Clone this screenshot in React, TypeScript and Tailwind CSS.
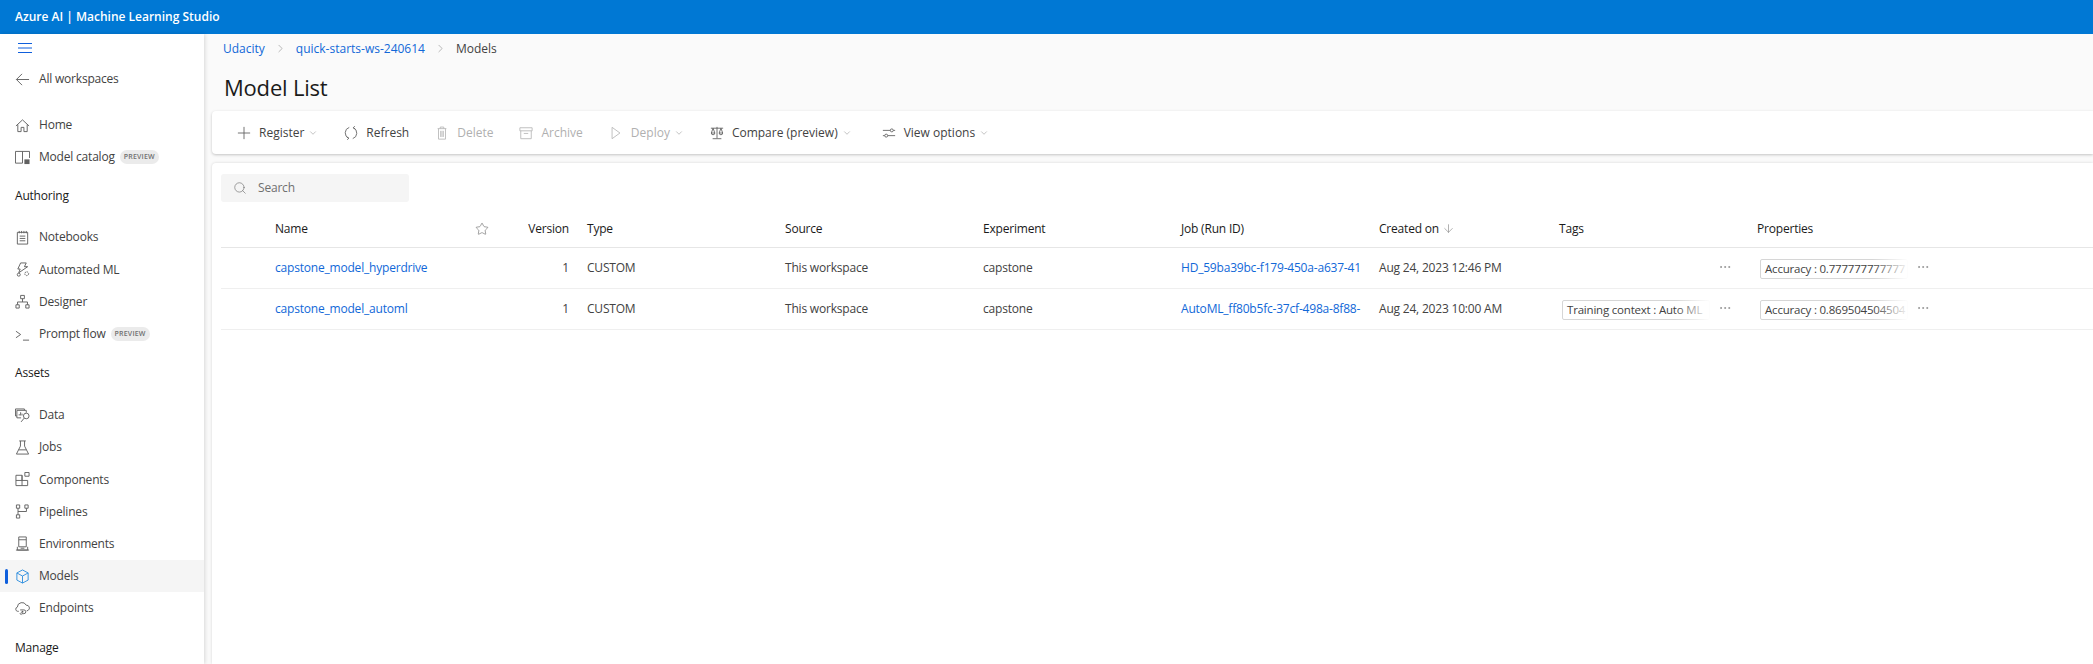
import React from 'react';
import { ArrowDown, ChevronDown, ChevronRight, Ellipsis, Search, Star } from 'lucide-react';

type IconProps = { className?: string };

const Svg = ({ className, children }: IconProps & { children: React.ReactNode }) => (
  <svg viewBox="0 0 16 16" fill="none" stroke="currentColor" strokeWidth="1" className={className}>
    {children}
  </svg>
);

const HomeIcon = ({ className }: IconProps) => (
  <Svg className={className}>
    <path d="M1 8.5L8 2l7 6.5M3 7v7.5h3.5v-4.5h3v4.5H13V7" />
  </Svg>
);
const CatalogIcon = ({ className }: IconProps) => (
  <Svg className={className}>
    <path d="M8 14H.5V1.5h15v7M8 1.5V14" />
    <rect x="10" y="10" width="5.5" height="5" fill="currentColor" stroke="none" />
  </Svg>
);
const NotebookIcon = ({ className }: IconProps) => (
  <Svg className={className}>
    <path d="M2.5 2.5h11v12.5h-11zM4.5 1v2.5M7 1v2.5M9.5 1v2.5M12 1v2.5M5 6.5h6M5 9h6M5 11.5h6" />
  </Svg>
);
const AutomlIcon = ({ className }: IconProps) => (
  <Svg className={className}>
    <path d="M6 1h6l-2 4h3.5L4 11.5l1.5-4H3z" />
    <circle cx="4" cy="13.5" r="1.6" />
    <circle cx="12.5" cy="12.5" r="2" strokeDasharray="1.5 .6" />
  </Svg>
);
const DesignerIcon = ({ className }: IconProps) => (
  <Svg className={className}>
    <path d="M6 1.5h4v3.5H6zM1 11.5h3.5V15H1zM11.5 11.5H15V15h-3.5zM8 5v3.5M2.7 11.5v-3h10.6v3" />
  </Svg>
);
const PromptIcon = ({ className }: IconProps) => (
  <Svg className={className}>
    <path d="M1 4.5l5 3.5-5 3.5M8.5 14h6.5" />
  </Svg>
);
const DataIcon = ({ className }: IconProps) => (
  <Svg className={className}>
    <path d="M.5 1h9.5v1.5M.5 1v7.5H2M2 2.5h10V5M2 2.5v8h4.5M4.5 8V6.5M6 8V4.5M7.5 8V6" />
    <circle cx="12" cy="8.5" r="3" />
    <path d="M9.8 10.8l-3.3 4" />
  </Svg>
);
const JobsIcon = ({ className }: IconProps) => (
  <Svg className={className}>
    <path d="M4.5 1h7M5.8 1v5.5L1.5 15h13l-4.3-8.5V1M4 10.5h8" />
  </Svg>
);
const ComponentsIcon = ({ className }: IconProps) => (
  <Svg className={className}>
    <path d="M1 3.5h6.5v11H1zM1 9h12.5v5.5h-6M7.5 3.5V9M10.5 .5h4.5v4h-4.5z" />
  </Svg>
);
const PipelinesIcon = ({ className }: IconProps) => (
  <Svg className={className}>
    <path d="M1.5 1h3.5v3.5H1.5zM10.5 1H14v3.5h-3.5zM1.5 11.5h3.5V15H1.5zM3.2 4.5v7M3.2 8h9V4.5" />
  </Svg>
);
const EnvironmentsIcon = ({ className }: IconProps) => (
  <Svg className={className}>
    <path d="M4 1h8v10.5H4zM4 4h8M2.5 11.5V15h11v-3.5M1 15h14M6 13h4" />
  </Svg>
);
const ModelsIcon = ({ className }: IconProps) => (
  <Svg className={className}>
    <path d="M8 1l6 3.2v7.6L8 15l-6-3.2V4.2zM2 4.2L8 7.5l6-3.3M8 7.5V15" />
  </Svg>
);
const EndpointsIcon = ({ className }: IconProps) => (
  <Svg className={className}>
    <path d="M4 11H2.8A2.3 2.3 0 012.5 6.5 5 5 0 0112 4.5a3 3 0 012 5.5l-1.5.5" />
    <path d="M5.5 9.5h4a2 2 0 010 4H7M7 12l-1.5 1.5L7 15" />
    <circle cx="8" cy="11.5" r="1" fill="currentColor" stroke="none" />
  </Svg>
);
const BackIcon = ({ className }: IconProps) => (
  <Svg className={className}>
    <path d="M7.5 2L1.5 8l6 6M1.5 8H15" />
  </Svg>
);
const PlusIcon = ({ className }: IconProps) => (
  <Svg className={className}>
    <path d="M8 1v14M1 8h14" />
  </Svg>
);
const RefreshIcon = ({ className }: IconProps) => (
  <Svg className={className}>
    <path d="M6 1.6A6.6 6.6 0 005.5 14M10 14.4A6.6 6.6 0 0010.5 2M12.3 .2L10.5 2l2.3 1.2M3.7 15.8L5.5 14l-2.3-1.2" />
  </Svg>
);
const TrashIcon = ({ className }: IconProps) => (
  <Svg className={className}>
    <path d="M3 3h10M6 3V1.2h4V3M4 3v12h8V3M6.5 5.5v7M9.5 5.5v7M8 5.5v7" />
  </Svg>
);
const ArchiveIcon = ({ className }: IconProps) => (
  <Svg className={className}>
    <path d="M1 2h14v3.5H1zM2 5.5V14.5h12V5.5M5.5 8.5h5" />
  </Svg>
);
const DeployIcon = ({ className }: IconProps) => (
  <Svg className={className}>
    <path d="M3.5 1.5L12.5 8l-9 6.5z" />
  </Svg>
);
const CompareIcon = ({ className }: IconProps) => (
  <Svg className={className}>
    <path d="M1 2.5h14M8 1v13M3 14.5h10M3.5 2.5L1.5 8h4zM12.5 2.5L10.5 8h4zM1.5 8a2 2 0 004 0M10.5 8a2 2 0 004 0" />
  </Svg>
);
const OptionsIcon = ({ className }: IconProps) => (
  <Svg className={className}>
    <path d="M1 5h8.5M13 5h2M1 11h2M6.5 11H15" />
    <circle cx="11.2" cy="5" r="1.7" />
    <circle cx="4.8" cy="11" r="1.7" />
  </Svg>
);

const Preview = () => (
  <span className="ml-[5px] h-[14px] rounded-full bg-[#ebebeb] px-[4px] text-[7px] font-semibold leading-[14px] tracking-[0.2px] text-[#707070]">
    PREVIEW
  </span>
);

const Item = ({
  icon: Icon,
  label,
  preview,
  active,
}: {
  icon: React.ComponentType<IconProps>;
  label: string;
  preview?: boolean;
  active?: boolean;
}) => (
  <div className={`relative flex h-[32.2px] items-center pl-[15px] ${active ? 'bg-[#f5f5f5]' : ''}`}>
    {active && <span className="absolute left-[5px] top-[9px] h-[15px] w-[3px] rounded-sm bg-[#0f5fdc]" />}
    <Icon className={`h-[15px] w-[15px] shrink-0 ${active ? 'text-[#2f8fdf]' : 'text-[#616161]'}`} />
    <span className={`ml-[9px] text-[12px] text-[#424242] ${active ? 'font-medium' : ''}`}>{label}</span>
    {preview && <Preview />}
  </div>
);

const Section = ({ label }: { label: string }) => (
  <div className="flex h-[32px] items-center pl-[15px] text-[12px] font-medium text-[#1a1a1a]">{label}</div>
);

const Sidebar = () => (
  <aside className="z-10 w-[204px] shrink-0 overflow-hidden bg-white shadow-[1px_0_4px_rgba(0,0,0,0.14)]">
    <div className="flex h-[28px] items-center pl-[18px]">
      <svg viewBox="0 0 14 10" className="h-[10px] w-[14px] text-[#0f5fdc]" stroke="currentColor" strokeWidth="1">
        <path d="M0 .5h14M0 5h14M0 9.5h14" />
      </svg>
    </div>
    <div className="flex h-[34px] items-center pl-[15px]">
      <BackIcon className="h-[15px] w-[15px] text-[#616161]" />
      <span className="ml-[9px] text-[12px] text-[#424242]">All workspaces</span>
    </div>
    <div className="mt-[13px]">
      <Item icon={HomeIcon} label="Home" />
      <Item icon={CatalogIcon} label="Model catalog" preview />
    </div>
    <div className="mt-[7px]">
      <Section label="Authoring" />
    </div>
    <div className="mt-[9px]">
      <Item icon={NotebookIcon} label="Notebooks" />
      <Item icon={AutomlIcon} label="Automated ML" />
      <Item icon={DesignerIcon} label="Designer" />
      <Item icon={PromptIcon} label="Prompt flow" preview />
    </div>
    <div className="mt-[7px]">
      <Section label="Assets" />
    </div>
    <div className="mt-[10px]">
      <Item icon={DataIcon} label="Data" />
      <Item icon={JobsIcon} label="Jobs" />
      <Item icon={ComponentsIcon} label="Components" />
      <Item icon={PipelinesIcon} label="Pipelines" />
      <Item icon={EnvironmentsIcon} label="Environments" />
      <Item icon={ModelsIcon} label="Models" active />
      <Item icon={EndpointsIcon} label="Endpoints" />
    </div>
    <div className="mt-[8px]">
      <Section label="Manage" />
    </div>
  </aside>
);

const ToolButton = ({
  icon: Icon,
  label,
  caret,
  disabled,
  className = '',
}: {
  icon: React.ComponentType<IconProps>;
  label: string;
  caret?: boolean;
  disabled?: boolean;
  className?: string;
}) => (
  <div className={`flex items-center ${disabled ? 'text-[#b0b0b0]' : 'text-[#424242]'} ${className}`}>
    <Icon className={`h-[14px] w-[14px] ${disabled ? 'text-[#b8b8b8]' : 'text-[#616161]'}`} />
    <span className="ml-[8px] text-[12px] font-medium tracking-normal">{label}</span>
    {caret && <ChevronDown className="ml-[4px] h-[10px] w-[10px] text-[#707070]" strokeWidth={1} />}
  </div>
);

const cols = 'grid grid-cols-[54px_214px_80px_216px_198px_198px_198px_180px_198px_1fr]';

const Chip = ({ text, width }: { text: string; width: string }) => (
  <div className={`relative mt-[2px] ${width}`}>
    <div className="h-[20px] overflow-hidden whitespace-nowrap rounded-[2px] border border-[#d6d6d6] pl-[4px] text-[11.5px] leading-[18px] text-[#424242]">
      {text}
    </div>
    <span className="absolute -inset-y-[1px] -right-[1px] w-[36px] bg-gradient-to-r from-transparent to-white" />
  </div>
);

const More = () => <Ellipsis className="-mt-[3px] h-[14px] w-[14px] text-[#707070]" strokeWidth={1} />;

const rows = [
  {
    name: 'capstone_model_hyperdrive',
    job: 'HD_59ba39bc-f179-450a-a637-41',
    created: 'Aug 24, 2023 12:46 PM',
    tag: '',
    accuracy: 'Accuracy : 0.777777777777',
  },
  {
    name: 'capstone_model_automl',
    job: 'AutoML_ff80b5fc-37cf-498a-8f88-',
    created: 'Aug 24, 2023 10:00 AM',
    tag: 'Training context : Auto ML',
    accuracy: 'Accuracy : 0.869504504504',
  },
];

export default function App() {
  return (
    <div className="flex h-screen flex-col overflow-hidden bg-white font-['Open_Sans','Noto_Sans',sans-serif] tracking-[-0.2px]">
      {/* Top Bar */}
      <div className="flex h-[34px] shrink-0 items-center bg-[#0078d4] pl-[15px] text-[12px] font-semibold tracking-normal text-white">
        Azure AI | Machine Learning Studio
      </div>

      <div className="flex min-h-0 flex-1">
        <Sidebar />

        <main className="flex min-w-0 flex-1 flex-col bg-[#fafafa] pl-[8px]">
          {/* Breadcrumb */}
          <div className="flex h-[29px] items-center pl-[11px] text-[12px] tracking-normal">
            <span className="text-[#1168d8]">Udacity</span>
            <ChevronRight className="mx-[9px] h-[13px] w-[13px] text-[#808080]" strokeWidth={1} />
            <span className="text-[#1168d8]">quick-starts-ws-240614</span>
            <ChevronRight className="mx-[9px] h-[13px] w-[13px] text-[#808080]" strokeWidth={1} />
            <span className="text-[#424242]">Models</span>
          </div>

          <h1 className="flex h-[48px] items-center pl-[12px] text-[22px] font-medium text-[#1a1a1a]">Model List</h1>

          {/* Toolbar */}
          <div className="flex h-[43px] shrink-0 items-center gap-[26px] rounded-l-[4px] bg-white pl-[25px] shadow-[0_1px_3px_rgba(0,0,0,0.22)]">
            <ToolButton icon={PlusIcon} label="Register" caret />
            <ToolButton icon={RefreshIcon} label="Refresh" />
            <ToolButton icon={TrashIcon} label="Delete" disabled />
            <ToolButton icon={ArchiveIcon} label="Archive" disabled />
            <ToolButton icon={DeployIcon} label="Deploy" caret disabled />
            <ToolButton icon={CompareIcon} label="Compare (preview)" caret />
            <ToolButton icon={OptionsIcon} label="View options" caret className="ml-[4px]" />
          </div>

          {/* Content Area */}
          <div className="mt-[9px] flex-1 rounded-tl-[4px] bg-white pl-[9px] pt-[11px] shadow-[0_0_3px_rgba(0,0,0,0.15)]">
            <div className="flex h-[28px] w-[188px] items-center rounded-[3px] bg-[#f5f5f5] pl-[12px] text-[12px] text-[#707070]">
              <Search className="h-[14px] w-[14px] text-[#616161]" strokeWidth={1} />
              <span className="ml-[11px]">Search</span>
            </div>

            <div className={`${cols} mt-[8px] h-[38px] items-center border-b border-[#e6e6e6] text-[12px] font-medium text-[#1a1a1a]`}>
              <span />
              <span className="flex items-center justify-between">
                Name
                <Star className="h-[14px] w-[14px] text-[#616161]" strokeWidth={1} />
              </span>
              <span className="text-right">Version</span>
              <span className="pl-[18px]">Type</span>
              <span>Source</span>
              <span>Experiment</span>
              <span>Job (Run ID)</span>
              <span className="flex items-center">
                Created on
                <ArrowDown className="ml-[3px] h-[13px] w-[13px] text-[#707070]" strokeWidth={1} />
              </span>
              <span>Tags</span>
              <span>Properties</span>
            </div>

            {rows.map((r) => (
              <div key={r.name} className={`${cols} h-[41px] items-center border-b border-[#efefef] text-[12px] text-[#424242]`}>
                <span />
                <span className="text-[#1168d8]">{r.name}</span>
                <span className="text-right">1</span>
                <span className="pl-[18px]">CUSTOM</span>
                <span>This workspace</span>
                <span>capstone</span>
                <span className="whitespace-nowrap text-[#1168d8]">{r.job}</span>
                <span className="whitespace-nowrap">{r.created}</span>
                <span className="flex items-center pl-[3px]">
                  <span className="w-[156px]">{r.tag && <Chip text={r.tag} width="w-[148px]" />}</span>
                  <More />
                </span>
                <span className="flex items-center pl-[3px]">
                  <Chip text={r.accuracy} width="w-[148px]" />
                  <span className="ml-[8px]"><More /></span>
                </span>
              </div>
            ))}
          </div>
        </main>
      </div>
    </div>
  );
}
